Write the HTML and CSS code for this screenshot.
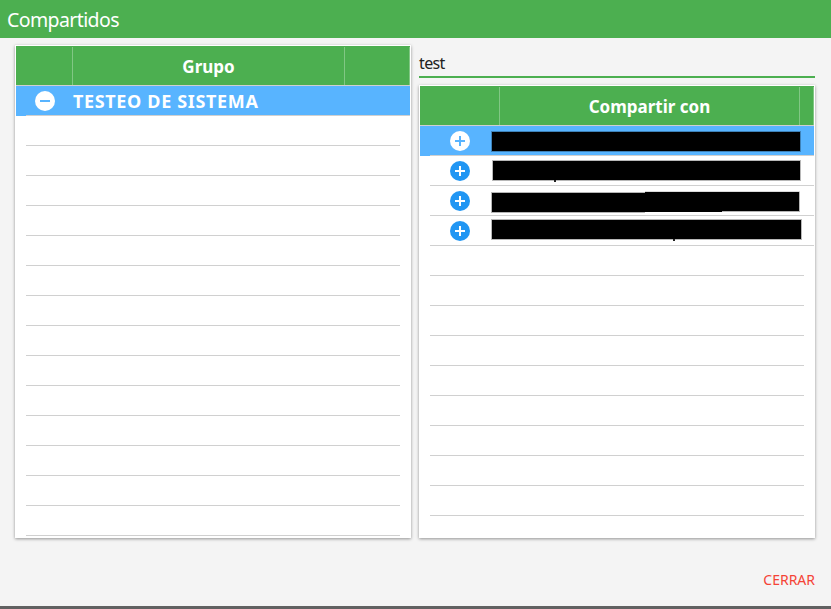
FILE: index.html
```
<!DOCTYPE html>
<html lang="es">
<head>
<meta charset="utf-8">
<title>Compartidos</title>
<link rel="stylesheet" href="styles.css">
</head>
<body>
<header class="titlebar"><h1>Compartidos</h1></header>
<main class="content">
  <section class="panel groups">
    <div class="head"><span></span><span class="name">Grupo</span><span></span></div>
    <div class="row selected"><div class="cells">
      <svg class="icon" viewBox="0 0 20 20"><circle cx="10" cy="10" r="10" fill="#fff"/><path d="M5 10h10" stroke="#58b4ff" stroke-width="2"/></svg>
      <strong class="label">TESTEO DE SISTEMA</strong>
    </div></div>
    <div class="blank"></div><div class="blank"></div><div class="blank"></div><div class="blank"></div><div class="blank"></div><div class="blank"></div><div class="blank"></div>
    <div class="blank"></div><div class="blank"></div><div class="blank"></div><div class="blank"></div><div class="blank"></div><div class="blank"></div><div class="blank"></div>
  </section>
  <div class="side">
    <div class="search"><span>test</span></div>
    <section class="panel people">
      <div class="head"><span></span><span class="name">Compartir con</span><span></span></div>
      <div class="row selected"><div class="cells">
        <svg class="icon" viewBox="0 0 20 20"><circle cx="10" cy="10" r="10" fill="#fff"/><path d="M5 10h10M10 5v10" stroke="#58b4ff" stroke-width="2"/></svg>
        <span class="redacted first"></span>
      </div></div>
      <div class="row"><div class="cells">
        <svg class="icon" viewBox="0 0 20 20"><circle cx="10" cy="10" r="10" fill="#2196f3"/><path d="M5 10h10M10 5v10" stroke="#fff" stroke-width="2"/></svg>
        <span class="redacted second"></span>
      </div></div>
      <div class="row"><div class="cells">
        <svg class="icon" viewBox="0 0 20 20"><circle cx="10" cy="10" r="10" fill="#2196f3"/><path d="M5 10h10M10 5v10" stroke="#fff" stroke-width="2"/></svg>
        <svg class="slanted" viewBox="0 0 309 22"><path d="M0 1H77V1H154V0.5H309V21H154V22H0z" fill="#b5b5b5"/><path d="M1 2H154V1H308V20H231V21H1z"/></svg>
      </div></div>
      <div class="row"><div class="cells">
        <svg class="icon" viewBox="0 0 20 20"><circle cx="10" cy="10" r="10" fill="#2196f3"/><path d="M5 10h10M10 5v10" stroke="#fff" stroke-width="2"/></svg>
        <span class="redacted fourth"></span>
      </div></div>
      <div class="blank"></div><div class="blank"></div><div class="blank"></div><div class="blank"></div><div class="blank"></div><div class="blank"></div><div class="blank"></div><div class="blank"></div><div class="blank"></div>
    </section>
  </div>
</main>
<footer class="actions"><button class="close" type="button">CERRAR</button></footer>
<div class="edge"></div>
</body>
</html>
```
FILE: styles.css
```
* { box-sizing: border-box; }
body {
  margin: 0;
  width: 831px;
  height: 609px;
  overflow: hidden;
  display: flex;
  flex-direction: column;
  background: #f4f4f4;
  font-family: "Noto Sans", sans-serif;
  color: #212121;
}
.titlebar {
  height: 38px;
  padding-left: 7px;
  background: #4caf50;
}
.titlebar h1 {
  margin: 0;
  font-size: 19.5px;
  font-weight: 400;
  letter-spacing: -.6px;
  line-height: 39px;
  color: #fff;
}
.content {
  display: grid;
  grid-template-columns: 396px 396px;
  column-gap: 8px;
  height: 500px;
  padding: 7px 0 0 15px;
}
.side {
  display: flex;
  flex-direction: column;
  gap: 7px;
}
.panel {
  height: 493px;
  padding: 1px;
  background: #fff;
  box-shadow: 0 1px 3px rgba(0, 0, 0, .4);
  overflow: hidden;
}
.people { height: 453px; }
.head {
  display: grid;
  grid-template-columns: 57px 272px 65px;
  height: 40px;
  padding-top: 1px;
  background: #4caf50;
  border-bottom: 1px solid #d0d0d0;
}
.people .head { grid-template-columns: 80px 300px 14px; }
.head span {
  height: 38px;
  border-right: 1px solid #81c784;
}
.head .name {
  font-size: 17px;
  font-weight: 700;
  line-height: 40px;
  text-align: center;
  color: #fff;
}
.row {
  height: 30px;
  padding-left: 10px;
}
.selected { background: #58b4ff; }
.cells {
  display: flex;
  height: 30px;
  padding-left: 9px;
  border-bottom: 1px solid #d0d0d0;
}
.people .cells { padding-left: 20px; }
.icon {
  width: 20px;
  height: 20px;
  margin-top: 5px;
  flex: none;
}
.label {
  margin-left: 18px;
  font-size: 18px;
  letter-spacing: .65px;
  line-height: 30px;
  white-space: nowrap;
  color: #fff;
}
.redacted {
  width: 308px;
  height: 19px;
  margin: 6px 0 0 22px;
  background: #000;
  box-shadow: 0 0 0 1px rgba(0, 0, 0, .28);
}
.second {
  width: 307px;
  margin: 5px 0 0 23px;
}
.slanted {
  width: 309px;
  height: 22px;
  margin: 5px 0 0 21px;
}
.fourth {
  width: 309px;
  margin-top: 4px;
}
.second::after,
.fourth::after {
  content: "";
  display: block;
  width: 2px;
  height: 2px;
  margin: 19px 0 0 61px;
  background: #222;
}
.fourth::after { margin-left: 181px; }
.second,
.fourth { display: flow-root; }
.blank {
  height: 30px;
  margin: 0 10px;
  border-bottom: 1px solid #d0d0d0;
}
.search {
  height: 33px;
  border-bottom: 2px solid #4caf50;
  font-size: 16px;
  letter-spacing: -.65px;
  line-height: 36px;
}
.actions {
  display: flex;
  flex: 1;
  justify-content: flex-end;
  padding: 32px 16px 0 0;
}
.close {
  height: 20px;
  padding: 0;
  border: 0;
  background: none;
  font: 14px/20px "Noto Sans", sans-serif;
  color: #f44336;
}
.edge {
  height: 3px;
  background: #616161;
}
```
